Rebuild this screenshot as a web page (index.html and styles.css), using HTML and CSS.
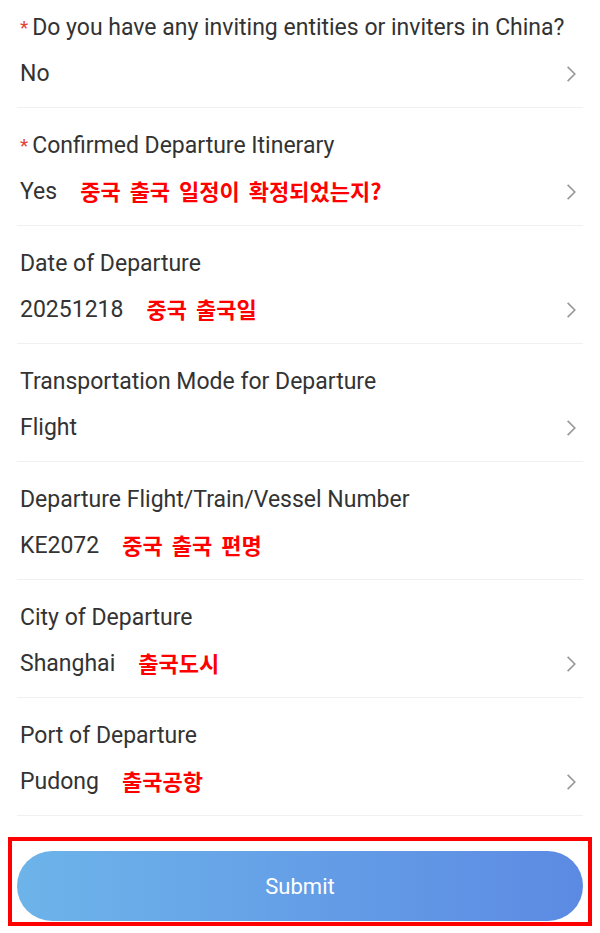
FILE: index.html
```html
<!DOCTYPE html>
<html lang="en">

<head>
    <meta charset="UTF-8">
    <meta name="viewport" content="width=device-width, initial-scale=1.0">
    <title>Departure Information</title>
    <link rel="stylesheet" href="styles.css">
</head>

<body>

    <div class="form">
        <div class="field">
            <div class="label"><span class="req">*</span>Do you have any inviting entities or inviters in China?</div>
            <div class="value-row">
                <span class="value">No</span>
                <svg class="chevron" viewBox="0 0 10 16"><path d="M1.5 1.5 L8 8 L1.5 14.5" /></svg>
            </div>
        </div>

        <div class="field">
            <div class="label"><span class="req">*</span>Confirmed Departure Itinerary</div>
            <div class="value-row">
                <span class="value">Yes</span>
                <span class="note">중국 출국 일정이 확정되었는지?</span>
                <svg class="chevron" viewBox="0 0 10 16"><path d="M1.5 1.5 L8 8 L1.5 14.5" /></svg>
            </div>
        </div>

        <div class="field">
            <div class="label">Date of Departure</div>
            <div class="value-row">
                <span class="value">20251218</span>
                <span class="note">중국 출국일</span>
                <svg class="chevron" viewBox="0 0 10 16"><path d="M1.5 1.5 L8 8 L1.5 14.5" /></svg>
            </div>
        </div>

        <div class="field">
            <div class="label">Transportation Mode for Departure</div>
            <div class="value-row">
                <span class="value">Flight</span>
                <svg class="chevron" viewBox="0 0 10 16"><path d="M1.5 1.5 L8 8 L1.5 14.5" /></svg>
            </div>
        </div>

        <div class="field">
            <div class="label">Departure Flight/Train/Vessel Number</div>
            <div class="value-row">
                <span class="value">KE2072</span>
                <span class="note">중국 출국 편명</span>
            </div>
        </div>

        <div class="field">
            <div class="label">City of Departure</div>
            <div class="value-row">
                <span class="value">Shanghai</span>
                <span class="note">출국도시</span>
                <svg class="chevron" viewBox="0 0 10 16"><path d="M1.5 1.5 L8 8 L1.5 14.5" /></svg>
            </div>
        </div>

        <div class="field">
            <div class="label">Port of Departure</div>
            <div class="value-row">
                <span class="value">Pudong</span>
                <span class="note">출국공항</span>
                <svg class="chevron" viewBox="0 0 10 16"><path d="M1.5 1.5 L8 8 L1.5 14.5" /></svg>
            </div>
        </div>
    </div>

    <div class="submit-box">
        <button class="submit">Submit</button>
    </div>

</body>

</html>
```

FILE: styles.css
```css
body {
    margin: 0;
    background: #fff;
    font-family: Roboto, "Noto Sans", Arial, sans-serif;
    color: #333;
}

.form {
    margin-top: -10px;
}

.field {
    margin: 0 17px;
    padding: 26px 3px 21px;
    border-bottom: 1px solid #f0f0f0;
}

.label {
    font-size: 23px;
    line-height: 24px;
    height: 24px;
    white-space: nowrap;
}

.req {
    color: #e0413a;
    font-size: 19px;
    margin-right: 4px;
    vertical-align: 1px;
}

.value-row {
    display: flex;
    align-items: center;
    height: 24px;
    margin-top: 22px;
}

.value {
    font-size: 23px;
    line-height: 24px;
}

.note {
    margin-left: 23px;
    margin-bottom: 5px;
    color: #f00;
    font-family: "Noto Sans CJK KR", sans-serif;
    font-weight: bold;
    font-size: 22px;
    line-height: 24px;
    word-spacing: 4px;
}

.chevron {
    margin-left: auto;
    margin-right: 3px;
    width: 11px;
    height: 18px;
    fill: none;
    stroke: #999;
    stroke-width: 1.5;
}

.submit-box {
    margin: 21px 8px 0;
    border: 4px solid #f00;
    padding: 10px 5px 1px 5px;
}

.submit {
    display: block;
    width: 100%;
    height: 70px;
    border: none;
    border-radius: 35px;
    background: linear-gradient(to right, #6db4ea, #5c8ae3);
    color: #fff;
    font-family: Roboto, sans-serif;
    font-size: 22px;
    cursor: pointer;
}
```
